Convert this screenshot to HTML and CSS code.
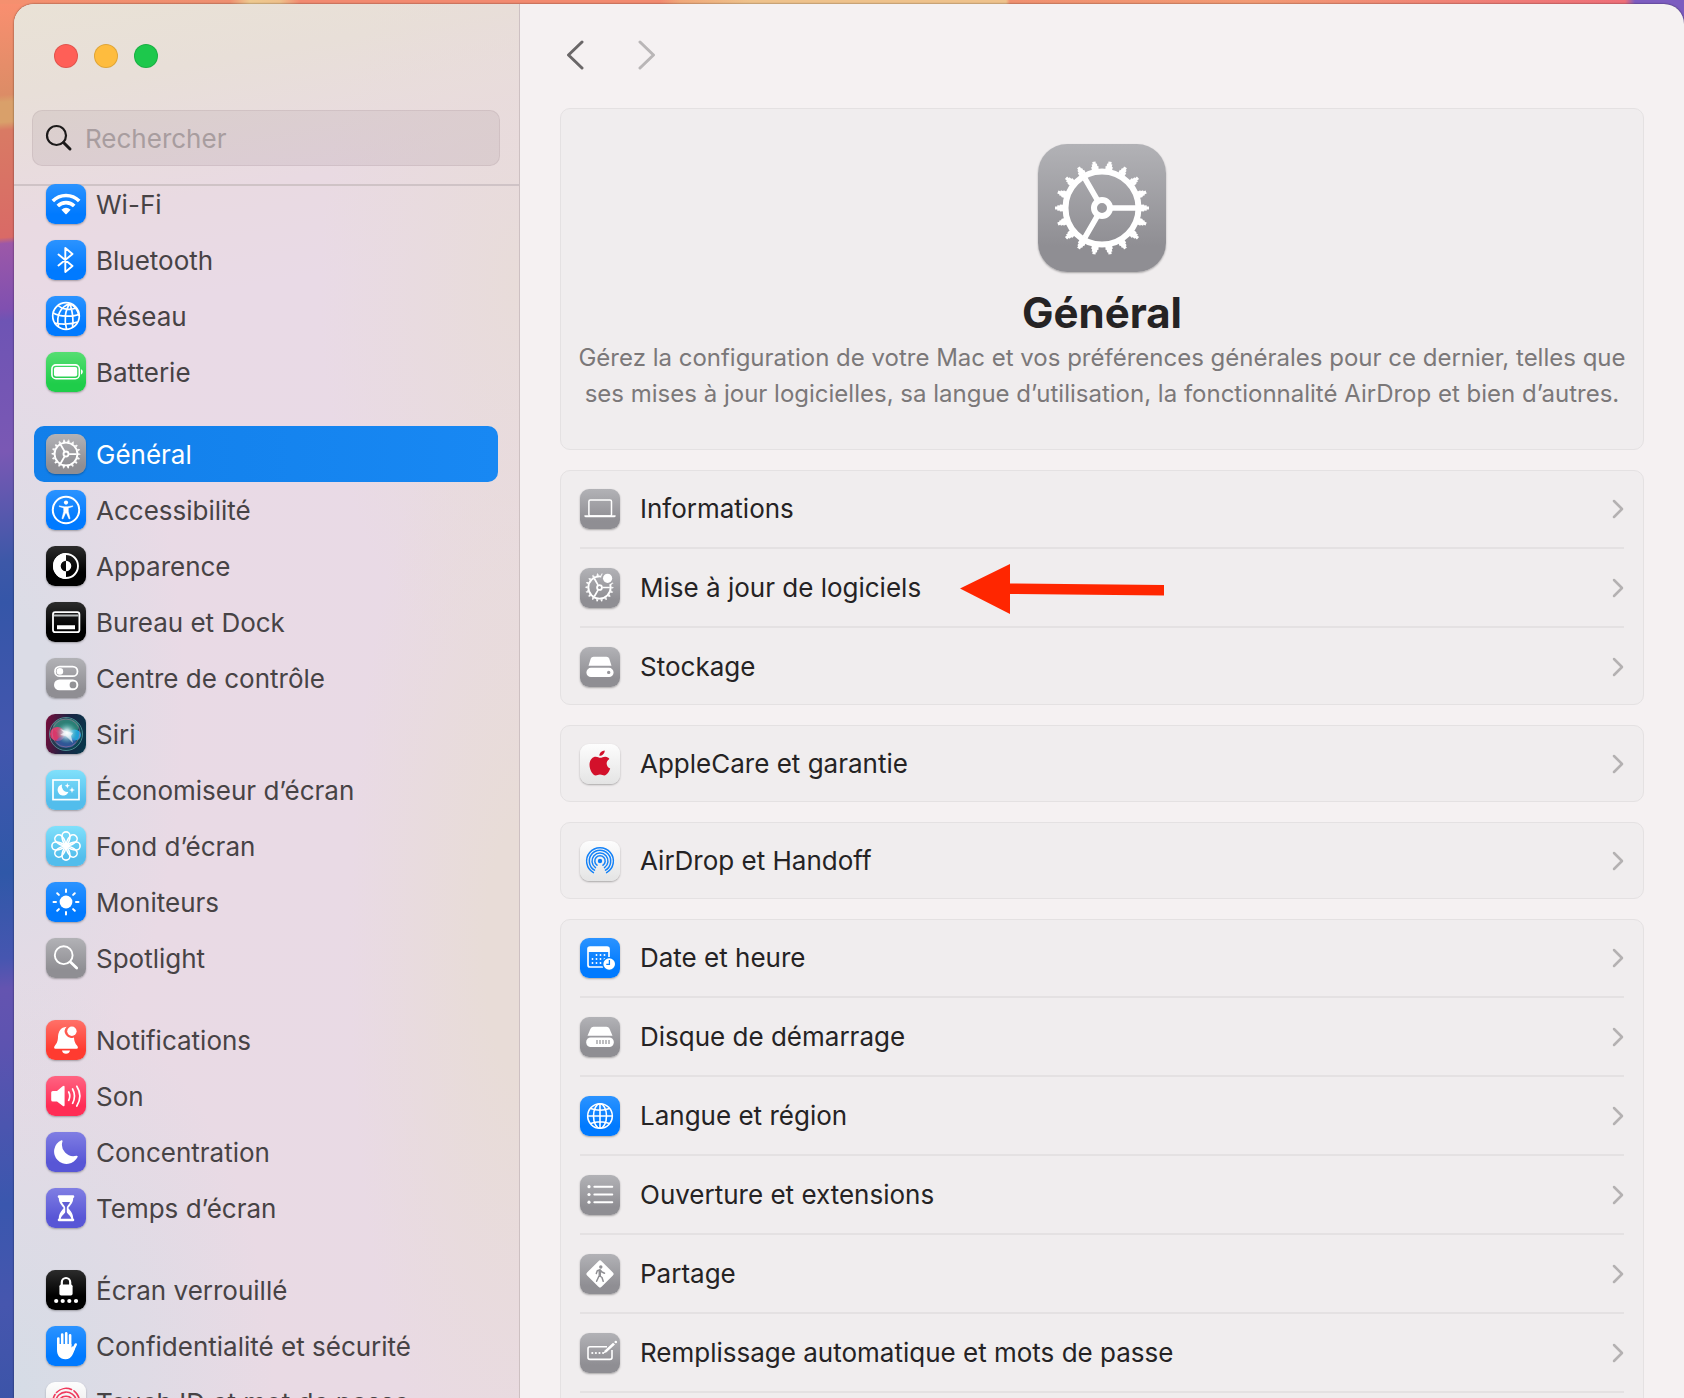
FILE: index.html
```html
<!DOCTYPE html>
<html lang="fr">
<head>
    <meta charset="UTF-8">
    <meta name="viewport" content="width=device-width, initial-scale=1.0">
    <title>Général</title>
    <link rel="stylesheet" href="styles.css">
</head>
<body>
    <!-- Icon sprite -->
    <svg class="sprite" aria-hidden="true">
        <defs>
            <symbol id="i-gear" viewBox="0 0 128 128">
                <g fill="none" stroke="#fff">
                    <circle cx="64" cy="64" r="36.5" stroke-width="6"/>
                    <circle cx="64" cy="64" r="40.5" stroke-width="3.5" pathLength="360" stroke-dasharray="10 10" stroke-dashoffset="5"/>
                    <circle cx="64" cy="64" r="43" stroke-width="3.5" pathLength="360" stroke-dasharray="7 13" stroke-dashoffset="3.5"/>
                    <circle cx="64" cy="64" r="45.500" stroke-width="3" pathLength="360" stroke-dasharray="4 16" stroke-dashoffset="2"/>
                    <circle cx="64" cy="64" r="8" stroke-width="6"/>
                    <path stroke-width="5.600" d="M74 64H98M59 55.300L47 34.600M59 72.700L47 93.400"/>
                </g>
            </symbol>
            <symbol id="i-wifi" viewBox="0 0 40 40">
                <g fill="none" stroke="#fff" stroke-width="3.600">
                    <path d="M6.800 17A18.600 18.600 0 0 1 33.200 17"/>
                    <path d="M11.800 22A11.600 11.600 0 0 1 28.200 22"/>
                </g>
                <path fill="#fff" d="M15.400 25.700Q20 21.900 24.600 25.700L20.600 29.900Q20 30.400 19.400 29.900Z"/>
            </symbol>
            <symbol id="i-bluetooth" viewBox="0 0 40 40">
                <path fill="none" stroke="#fff" stroke-width="1.900" stroke-linejoin="round" stroke-linecap="round" d="M12.500 14.500L26.500 26L19.300 32V8L26.500 14L12.500 25.500"/>
            </symbol>
            <symbol id="i-network" viewBox="0 0 40 40">
                <g fill="none" stroke="#fff" stroke-width="1.700">
                    <circle cx="20" cy="20" r="13.300"/>
                    <path d="M24 7.500C14 11 10 20 12.500 30.500M24 7.500C19 14 18 24 20.500 33M24 7.500C26 14 28 22 26.500 31M24 7.500C29 10 32 15 33 20M12 9.500C16 13.500 24 14.500 30 12M7.300 17C13 20.500 27 21.500 33.200 18M8.500 27C14 28.500 25 28.500 31.500 26"/>
                </g>
            </symbol>
            <symbol id="i-battery" viewBox="0 0 40 40">
                <rect x="5.900" y="12.900" width="27.400" height="13.800" rx="4" fill="none" stroke="#fff" stroke-width="1.600"/>
                <rect x="8" y="15" width="23.200" height="9.600" rx="2" fill="#fff"/>
                <path fill="#fff" d="M35 17.300C37.400 18 37.400 21.700 35 22.400Z"/>
            </symbol>
            <symbol id="i-access" viewBox="0 0 40 40">
                <circle cx="20" cy="20" r="13.200" fill="none" stroke="#fff" stroke-width="2"/>
                <circle cx="20" cy="12.600" r="2.100" fill="#fff"/>
                <path fill="#fff" stroke="#fff" stroke-width=".500" stroke-linejoin="round" d="M13.200 15.800L18.300 16.700H21.700L26.800 15.800V16.600L22.300 17.900V21.500L24.100 28.600L23 28.900L20.400 23H19.600L17 28.900L15.900 28.600L17.700 21.500V17.900L13.200 16.600Z"/>
            </symbol>
            <symbol id="i-appearance" viewBox="0 0 40 40">
                <circle cx="20" cy="20" r="12" fill="none" stroke="#fff" stroke-width="1.900"/>
                <path fill="#fff" d="M20 7A13 13 0 0 0 20 33V25.300A5.300 5.300 0 0 1 20 14.700Z"/>
                <path fill="#fff" d="M20 14.700A5.300 5.300 0 0 1 20 25.300Z"/>
            </symbol>
            <symbol id="i-dock" viewBox="0 0 40 40">
                <rect x="7" y="10.200" width="26.400" height="20" rx="2.200" fill="none" stroke="#fff" stroke-width="1.800"/>
                <path fill="#b9bdbd" d="M8 12.500H32.500V14.500H8Z"/>
                <path fill="#fff" d="M11 23.200H29V27.200H11Z"/>
            </symbol>
            <symbol id="i-control" viewBox="0 0 40 40">
                <rect x="9" y="8.600" width="22.500" height="9.600" rx="4.800" fill="none" stroke="#fff" stroke-width="1.800"/>
                <circle cx="13.900" cy="13.400" r="3.300" fill="#fff"/>
                <rect x="8" y="21.500" width="24.300" height="10.800" rx="5.400" fill="#fff"/>
                <circle cx="27" cy="26.900" r="3.400" fill="#929296"/>
            </symbol>
            <symbol id="i-siri" viewBox="0 0 40 40">
                <radialGradient id="siriCore" cx=".520" cy=".480" r=".500">
                    <stop offset="0" stop-color="#fff"/>
                    <stop offset=".300" stop-color="#d8eef6" stop-opacity=".850"/>
                    <stop offset="1" stop-color="#35a7a0" stop-opacity="0"/>
                </radialGradient>
                <circle cx="20" cy="20" r="16" fill="#0f5a62" fill-opacity=".550"/>
                <ellipse cx="20" cy="12.500" rx="13" ry="8" fill="#3fb392" fill-opacity=".550"/>
                <ellipse cx="11.500" cy="20" rx="7.500" ry="7" fill="#f8386f" fill-opacity=".850"/>
                <ellipse cx="28.500" cy="21" rx="6.500" ry="5.500" fill="#23b0f0" fill-opacity=".850"/>
                <ellipse cx="20" cy="28" rx="10" ry="6" fill="#4b6ad8" fill-opacity=".500"/>
                <circle cx="20.500" cy="19.500" r="11" fill="url(#siriCore)"/>
                <path fill="#fff" d="M14 15L20 17L27 19L25 22L27 29L20 22L14 21L18 18.500Z" fill-opacity=".600"/>
                <circle cx="20" cy="20" r="16.500" fill="none" stroke="#5fb3ae" stroke-opacity=".700"/>
                <circle cx="20" cy="19" r="14" fill="none" stroke="#c07a9d" stroke-opacity=".500"/>
            </symbol>
            <symbol id="i-saver" viewBox="0 0 40 40">
                <rect x="7" y="10" width="26" height="19.600" fill="none" stroke="#fff" stroke-width="1.700"/>
                <path fill="#fff" d="M16 14.500A5.600 5.600 0 1 0 22.500 21.800A5.600 5.600 0 0 1 16 14.500Z"/>
                <path fill="#fff" d="M21.300 13L22 15.100L24 15.800L22 16.500L21.300 18.500L20.600 16.500L18.700 15.800L20.600 15.100ZM26 17L26.800 19.300L29 20L26.800 20.700L26 23L25.200 20.700L23 20L25.200 19.300Z"/>
            </symbol>
            <symbol id="i-wallpaper" viewBox="0 0 40 40">
                <g fill="none" stroke="#fff" stroke-width="1.600">
                    <path id="petal" d="M20 20C17 16.500 16 13 16 9.900A4 4 0 0 1 24 9.900C24 13 23 16.500 20 20Z"/>
                    <use href="#petal" transform="rotate(45 20 20)"/>
                    <use href="#petal" transform="rotate(90 20 20)"/>
                    <use href="#petal" transform="rotate(135 20 20)"/>
                    <use href="#petal" transform="rotate(180 20 20)"/>
                    <use href="#petal" transform="rotate(225 20 20)"/>
                    <use href="#petal" transform="rotate(270 20 20)"/>
                    <use href="#petal" transform="rotate(315 20 20)"/>
                </g>
            </symbol>
            <symbol id="i-display" viewBox="0 0 40 40">
                <circle cx="20" cy="20" r="6.400" fill="#fff"/>
                <path stroke="#fff" stroke-width="2" stroke-linecap="round" d="M20 7.500V10M20 30V32.500M7.500 20H10M30 20H32.500M11.200 11.200L12.900 12.900M27.100 27.100L28.800 28.800M11.200 28.800L12.900 27.100M27.100 12.900L28.800 11.200"/>
            </symbol>
            <symbol id="i-spotlight" viewBox="0 0 40 40">
                <circle cx="17.700" cy="17.200" r="8.900" fill="none" stroke="#fff" stroke-width="1.900"/>
                <path stroke="#fff" stroke-width="2.800" stroke-linecap="round" d="M24.700 24.200L30.700 30"/>
            </symbol>
            <symbol id="i-bell" viewBox="0 0 40 40">
                <path fill="#fff" d="M20.600 6.800C14.500 7.500 12.300 11.500 12 17C11.800 22 10.500 23.500 9 25.500C7.500 27.500 8 28.800 9.500 28.800H30.500C32 28.800 32.500 27.500 31 25.500C29.500 23.500 28.300 22 28 17.400A6.600 6.600 0 0 1 20.600 6.800ZM16 30.500H24A4.100 4.100 0 0 1 16 30.500Z"/>
                <circle cx="25.900" cy="11.200" r="4.700" fill="#fff"/>
            </symbol>
            <symbol id="i-sound" viewBox="0 0 40 40">
                <path fill="#fff" d="M6.800 15H11L16.600 10.300Q18.600 8.800 18.600 11V29Q18.600 31.200 16.600 29.700L11 25.500H6.800Q5.200 25.500 5.200 24V16.500Q5.200 15 6.800 15Z"/>
                <path fill="none" stroke="#fff" stroke-width="1.700" stroke-linecap="round" d="M22.700 16Q24.900 20 22.700 24.300M26.600 13Q30.400 20 26.600 27.300M30.800 10.300Q37 20 30.800 30"/>
            </symbol>
            <symbol id="i-moon" viewBox="0 0 40 40">
                <path fill="#fff" d="M16.600 9A1 1 0 0 0 15.400 8.200A12.400 12.400 0 1 0 31.600 25A.9.900 0 0 0 30.500 23.800A11.500 11.500 0 0 1 16.600 9Z"/>
            </symbol>
            <symbol id="i-hourglass" viewBox="0 0 40 40">
                <path fill="#fff" d="M13 7.200H27Q28.300 7.200 28.300 8.500Q28.300 9.700 27.200 10C27.200 15 24.500 17 22.200 20C24.500 23 27.200 25.500 27.200 30.500Q28.300 30.900 28.300 32Q28.300 33.300 27 33.300H13Q11.700 33.300 11.700 32Q11.700 30.900 12.800 30.500C12.800 25.500 15.500 23 17.800 20C15.500 17 12.800 15 12.800 10Q11.700 9.700 11.700 8.500Q11.700 7.200 13 7.200Z"/>
                <path fill="#625fd5" d="M16 14H24C23.200 16.500 21 17.500 20.800 19.500V24C21 26 24.500 27 25.300 30.800H14.700C15.500 27 19 26 19.200 24V19.500C19 17.500 16.800 16.500 16 14Z"/>
            </symbol>
            <symbol id="i-lock" viewBox="0 0 40 40">
                <rect x="13.400" y="14.500" width="13.200" height="11" rx="1.800" fill="#fff"/>
                <path fill="none" stroke="#fff" stroke-width="2.200" d="M15.800 16V12.200A4.200 4.200 0 0 1 24.200 12.200V16"/>
                <circle cx="10.200" cy="31" r="2.100" fill="#fff"/>
                <circle cx="16.700" cy="31" r="2.100" fill="#fff"/>
                <circle cx="23.300" cy="31" r="2.100" fill="#fff"/>
                <circle cx="30" cy="31" r="2.100" fill="#fff"/>
            </symbol>
            <symbol id="i-hand" viewBox="0 0 40 40">
                <path fill="none" stroke="#fff" stroke-width="2.600" stroke-linecap="round" d="M12.300 12.500V23M16.200 8.500V20M20.200 7.300V20M24.100 9.300V20M29.700 18.500L26.500 25"/>
                <path fill="#fff" d="M11 18H25.400V21.600L27 20L29 22.500C27.500 27 26 33.200 19.500 33.200C13.500 33.200 11 29 11 24Z"/>
            </symbol>
            <symbol id="i-touch" viewBox="0 0 40 40">
                <g fill="none" stroke="#ef3a5d" stroke-width="1.600" stroke-linecap="round">
                    <path d="M10.500 10.500A13.500 13.500 0 0 1 25.500 7.500M28 8.800A13.500 13.500 0 0 1 33.300 18"/>
                    <path d="M7 18A13.500 13.500 0 0 1 9 12.500M9.800 19A10.400 10.400 0 0 1 30.200 18"/>
                    <path d="M12.800 20A7.400 7.400 0 0 1 27.200 20M16 21A4.300 4.300 0 0 1 24 21"/>
                </g>
            </symbol>
            <symbol id="i-laptop" viewBox="0 0 40 40">
                <rect x="8.900" y="10.900" width="22.600" height="16" rx="1.500" fill="none" stroke="#fff" stroke-width="1.500"/>
                <path fill="#fff" d="M4.400 26.200H35.600V27.200Q35.600 28.300 34 28.300H6Q4.400 28.300 4.400 27.200Z"/>
            </symbol>
            <symbol id="i-update" viewBox="0 0 40 40">
                <mask id="updateCut">
                    <path fill="#fff" d="M0 0H40V40H0Z"/>
                    <circle cx="27.400" cy="10.300" r="6.300" fill="#000"/>
                </mask>
                <g mask="url(#updateCut)"><use href="#i-gear" width="39" height="39" x="0" y="0"/></g>
                <circle cx="27.600" cy="10.300" r="4.600" fill="#fff"/>
            </symbol>
            <symbol id="i-storage" viewBox="0 0 40 40">
                <path fill="#fff" d="M13.500 9.800H26.500Q28.600 9.800 29.300 11.800L31.500 18.800H8.500L10.700 11.800Q11.400 9.800 13.500 9.800Z"/>
                <path fill="#fff" fill-rule="evenodd" d="M11 20.800H29A4.600 4.600 0 0 1 29 30H11A4.600 4.600 0 0 1 11 20.800ZM28.700 23.700A1.700 1.700 0 0 0 28.700 27.100A1.700 1.700 0 0 0 28.700 23.700Z"/>
            </symbol>
            <symbol id="i-apple" viewBox="0 0 40 40">
                <path fill="#d3112b" d="M20.200 13.800C22 13.800 23.200 12.600 25.300 12.700C27.200 12.800 28.600 13.700 29.400 14.900C25.300 17.400 26 22.900 30.200 24.600C29 28 26.700 31.500 24.300 31.500C22.800 31.500 22 30.600 20 30.600C18 30.600 17.200 31.500 15.800 31.500C12.600 31.500 9.500 25.600 9.500 20.800C9.500 15.600 12.600 12.700 15.800 12.700C17.700 12.700 19 13.800 20.200 13.800ZM19.400 11.800C19.200 9 21.900 6.500 24.700 6.400C24.900 9.300 22.300 12 19.400 11.800Z"/>
            </symbol>
            <symbol id="i-airdrop" viewBox="0 0 40 40">
                <circle cx="20" cy="20" r="2.200" fill="#0a7cf5"/>
                <g fill="none" stroke="#1482f7" stroke-width="1.500" stroke-linecap="round">
                    <path d="M17 24.200A5.200 5.200 0 1 1 23 24.200"/>
                    <path d="M15.500 26.600A8 8 0 1 1 24.500 26.600"/>
                    <path d="M14.500 29.200A10.700 10.700 0 1 1 25.500 29.200"/>
                    <path d="M13.400 31.700A13.400 13.400 0 1 1 26.600 31.700"/>
                </g>
            </symbol>
            <symbol id="i-date" viewBox="0 0 40 40">
                <path fill="none" stroke="#fff" stroke-width="1.700" d="M23 29H10Q8 29 8 27V11Q8 9.200 10 9.200H27Q29 9.200 29 11V19"/>
                <path fill="#fff" d="M8 10H29V14H8Z"/>
                <path stroke="#fff" stroke-width="1.900" stroke-linecap="round" stroke-dasharray="0 4" d="M16.500 17H26M12.500 21H25M12.500 25H22"/>
                <circle cx="29.200" cy="26" r="7" fill="#0480fb"/>
                <circle cx="29.200" cy="26" r="5.800" fill="#fff"/>
                <path fill="none" stroke="#0480fb" stroke-width="1.300" d="M29.400 22V26.400H26.300"/>
            </symbol>
            <symbol id="i-disk" viewBox="0 0 40 40">
                <path fill="#fff" d="M13.500 9.800H26.500Q28.600 9.800 29.500 11.800L32.500 18.800H7.500L10.500 11.800Q11.400 9.800 13.500 9.800Z"/>
                <rect x="6.200" y="20.500" width="27.600" height="9.500" rx="4.500" fill="#fff"/>
                <path stroke="#929296" stroke-width="1.200" d="M17 23V27M20 23V27M23 23V27M26 23V27M29 23V27"/>
            </symbol>
            <symbol id="i-globe" viewBox="0 0 40 40">
                <g fill="none" stroke="#fff" stroke-width="1.600">
                    <circle cx="20" cy="20" r="12.300"/>
                    <ellipse cx="20" cy="20" rx="6.500" ry="12.300"/>
                    <path d="M20 7.700V32.300M7.700 20H32.300M10.500 12.500Q20 16 29.500 12.500M10.500 27.500Q20 24 29.500 27.500"/>
                </g>
            </symbol>
            <symbol id="i-list" viewBox="0 0 40 40">
                <g fill="#fff"><circle cx="9" cy="11.700" r="1.600"/><circle cx="9" cy="19.500" r="1.600"/><circle cx="9" cy="27.200" r="1.600"/></g>
                <path stroke="#fff" stroke-width="1.900" stroke-linecap="round" d="M14.300 11.700H32.300M14.300 19.500H32.300M14.300 27.200H32.300"/>
            </symbol>
            <symbol id="i-share" viewBox="0 0 40 40">
                <rect x="9.800" y="9.800" width="20.400" height="20.400" rx="2.200" fill="#fff" transform="rotate(45 20 20)"/>
                <circle cx="20.800" cy="13" r="1.700" fill="#8f8f93"/>
                <path fill="none" stroke="#8f8f93" stroke-width="1.500" stroke-linecap="round" stroke-linejoin="round" d="M16.300 19.500L17.300 16.700L20 15.800L22 18L24.500 19.200M19.300 17V21.500L22 23.500L23.200 27.200M19 22L16.600 27.200M20.300 16.500V21.500"/>
            </symbol>
            <symbol id="i-autofill" viewBox="0 0 40 40">
                <path fill="none" stroke="#fff" stroke-width="1.600" d="M27 13.700H10Q8 13.700 8 15.700V24.500Q8 26.400 10 26.400H30Q32 26.400 32 24.500V17"/>
                <path stroke="#fff" stroke-width="2.200" stroke-linecap="round" stroke-dasharray="0 3.600" d="M12.300 20H23.500"/>
                <path fill="#fff" d="M33 9.800L35 11.600L26.500 19.300L23.600 20.300L24.700 17.600Z"/>
                <circle cx="35.800" cy="9" r="1.300" fill="#fff"/>
            </symbol>
            <symbol id="i-chevron" viewBox="0 0 12 20">
                <path fill="none" stroke="currentColor" stroke-width="2.500" stroke-linecap="round" stroke-linejoin="round" d="M2 2L10 10L2 18"/>
            </symbol>
            <symbol id="i-arrow-nav" viewBox="0 0 18 30">
                <path fill="none" stroke="currentColor" stroke-width="3" stroke-linecap="round" stroke-linejoin="round" d="M2 2L15.500 15L2 28"/>
            </symbol>
        </defs>
    </svg>

    <div class="window">
        <aside class="sidebar">
            <header class="sidebar-header">
                <div class="traffic">
                    <button class="light red" aria-label="Fermer"></button>
                    <button class="light yellow" aria-label="Réduire"></button>
                    <button class="light green" aria-label="Agrandir"></button>
                </div>
                <label class="search">
                    <svg viewBox="0 0 28 28" width="28" height="28" aria-hidden="true">
                        <circle cx="11.500" cy="11.500" r="9.500" fill="none" stroke="#1c1a1a" stroke-width="2.200"/>
                        <path d="M18.500 18.500L25 25" stroke="#1c1a1a" stroke-width="3" stroke-linecap="round"/>
                    </svg>
                    <input type="search" placeholder="Rechercher" aria-label="Rechercher">
                </label>
            </header>

            <nav class="menu">
                <div class="menu-group">
                    <a href="#"><svg class="icon blue"><use href="#i-wifi"/></svg>Wi-Fi</a>
                    <a href="#"><svg class="icon blue"><use href="#i-bluetooth"/></svg>Bluetooth</a>
                    <a href="#"><svg class="icon blue"><use href="#i-network"/></svg>Réseau</a>
                    <a href="#"><svg class="icon lime"><use href="#i-battery"/></svg>Batterie</a>
                </div>
                <div class="menu-group">
                    <a href="#" class="active" aria-current="page"><svg class="icon gray"><use href="#i-gear"/></svg>Général</a>
                    <a href="#"><svg class="icon blue"><use href="#i-access"/></svg>Accessibilité</a>
                    <a href="#"><svg class="icon black"><use href="#i-appearance"/></svg>Apparence</a>
                    <a href="#"><svg class="icon black"><use href="#i-dock"/></svg>Bureau et Dock</a>
                    <a href="#"><svg class="icon gray"><use href="#i-control"/></svg>Centre de contrôle</a>
                    <a href="#"><svg class="icon siri"><use href="#i-siri"/></svg>Siri</a>
                    <a href="#"><svg class="icon sky"><use href="#i-saver"/></svg>Économiseur d’écran</a>
                    <a href="#"><svg class="icon sky"><use href="#i-wallpaper"/></svg>Fond d’écran</a>
                    <a href="#"><svg class="icon blue"><use href="#i-display"/></svg>Moniteurs</a>
                    <a href="#"><svg class="icon gray"><use href="#i-spotlight"/></svg>Spotlight</a>
                </div>
                <div class="menu-group">
                    <a href="#"><svg class="icon orange"><use href="#i-bell"/></svg>Notifications</a>
                    <a href="#"><svg class="icon pink"><use href="#i-sound"/></svg>Son</a>
                    <a href="#"><svg class="icon indigo"><use href="#i-moon"/></svg>Concentration</a>
                    <a href="#"><svg class="icon indigo"><use href="#i-hourglass"/></svg>Temps d’écran</a>
                </div>
                <div class="menu-group">
                    <a href="#"><svg class="icon black"><use href="#i-lock"/></svg>Écran verrouillé</a>
                    <a href="#"><svg class="icon blue"><use href="#i-hand"/></svg>Confidentialité et sécurité</a>
                    <a href="#"><svg class="icon white"><use href="#i-touch"/></svg>Touch ID et mot de passe</a>
                </div>
            </nav>
        </aside>

        <main class="content">
            <div class="toolbar">
                <button class="nav-btn back" aria-label="Précédent"><svg><use href="#i-arrow-nav"/></svg></button>
                <button class="nav-btn" aria-label="Suivant" disabled><svg><use href="#i-arrow-nav"/></svg></button>
            </div>

            <section class="card hero">
                <svg class="icon gray big"><use href="#i-gear"/></svg>
                <h1>Général</h1>
                <p>Gérez la configuration de votre Mac et vos préférences générales pour ce dernier, telles que ses mises à jour logicielles, sa langue d’utilisation, la fonctionnalité AirDrop et bien d’autres.</p>
            </section>

            <ul class="card">
                <li><a href="#"><svg class="icon gray"><use href="#i-laptop"/></svg>Informations<svg class="chevron"><use href="#i-chevron"/></svg></a></li>
                <li>
                    <a href="#"><svg class="icon gray"><use href="#i-update"/></svg>Mise à jour de logiciels<svg class="chevron"><use href="#i-chevron"/></svg></a>
                    <!-- Arrow drawn over the row -->
                    <svg class="arrow" viewBox="0 0 204 50" aria-hidden="true"><path fill="#ff2600" d="M0 24.500L50 0V19.500L204 21V31.500L50 30V50Z"/></svg>
                </li>
                <li><a href="#"><svg class="icon gray"><use href="#i-storage"/></svg>Stockage<svg class="chevron"><use href="#i-chevron"/></svg></a></li>
            </ul>

            <ul class="card">
                <li><a href="#"><svg class="icon white"><use href="#i-apple"/></svg>AppleCare et garantie<svg class="chevron"><use href="#i-chevron"/></svg></a></li>
            </ul>

            <ul class="card">
                <li><a href="#"><svg class="icon white"><use href="#i-airdrop"/></svg>AirDrop et Handoff<svg class="chevron"><use href="#i-chevron"/></svg></a></li>
            </ul>

            <ul class="card">
                <li><a href="#"><svg class="icon blue"><use href="#i-date"/></svg>Date et heure<svg class="chevron"><use href="#i-chevron"/></svg></a></li>
                <li><a href="#"><svg class="icon gray"><use href="#i-disk"/></svg>Disque de démarrage<svg class="chevron"><use href="#i-chevron"/></svg></a></li>
                <li><a href="#"><svg class="icon blue"><use href="#i-globe"/></svg>Langue et région<svg class="chevron"><use href="#i-chevron"/></svg></a></li>
                <li><a href="#"><svg class="icon gray"><use href="#i-list"/></svg>Ouverture et extensions<svg class="chevron"><use href="#i-chevron"/></svg></a></li>
                <li><a href="#"><svg class="icon gray"><use href="#i-share"/></svg>Partage<svg class="chevron"><use href="#i-chevron"/></svg></a></li>
                <li><a href="#"><svg class="icon gray"><use href="#i-autofill"/></svg>Remplissage automatique et mots de passe<svg class="chevron"><use href="#i-chevron"/></svg></a></li>
                <li class="spacer"></li>
            </ul>
        </main>
    </div>
</body>
</html>
```
FILE: styles.css
```css
* {
    margin: 0;
    padding: 0;
    box-sizing: border-box;
}

body {
    font-family: Inter, 'Liberation Sans', sans-serif;
    font-size: 26px;
    color: #252324;
    height: 100vh;
    overflow: hidden;
    padding: 4px 0 0 14px;
    background:
        linear-gradient(90deg, #f5906f 0, #ee8f70 230px, #eec98f 250px, #eec08a 280px, #f28a70 300px, #f28a70 660px, #f0a87a 680px, #eec28c 750px, #eec28c 1006px, #f09070 1010px, #f29a74 1250px, #ee6e78 1625px, #7c5cc0 1635px) 0 0 / 100% 4px no-repeat,
        linear-gradient(90deg, #7c5cc0, #7c5cc0) 100% 0 / 30px 30px no-repeat,
        linear-gradient(175deg, #fa8f70 0, #dc8c66 95px, #d9a06a 102px, #d9a06a 122px, #d97a64 130px, #d96a66 237px, #9c58a8 243px, #8050b0 308px, #6e54b4 320px, #7a58b4 450px, #3d58a8 560px, #3556a8 600px, #4356ae 735px, #2f58a8 870px, #4656b0 955px, #6454b0 985px, #5d53b0 1040px, #3a57ae 1200px, #4656ae 1300px, #3c54a8 100%) 0 0 / 40px 100% no-repeat;
}

.sprite {
    position: absolute;
    width: 0;
    height: 0;
}

.window {
    display: flex;
    height: 100%;
    overflow: hidden;
    border-radius: 20px 20px 0 0;
    background: #f5f1f2;
    box-shadow: 0 0 2px rgba(0, 0, 0, 0.6);
}

/* Sidebar */
.sidebar {
    flex: 0 0 506px;
    min-width: 0;
    border-right: 1px solid #cdc0c2;
    background:
        radial-gradient(ellipse 260px 420px at 0 100%, #d5dce6 0, rgba(213, 220, 230, 0) 100%),
        radial-gradient(ellipse 170px 420px at 0 50%, #dbdce6 20%, rgba(219, 220, 230, 0) 100%),
        radial-gradient(ellipse 170px 600px at 100% 68%, #e8dcd7 20%, rgba(232, 220, 215, 0) 100%),
        radial-gradient(ellipse 200px 400px at 100% 20%, #e8dcd9 0, rgba(232, 220, 217, 0) 100%),
        linear-gradient(170deg, #e9e2d6 0, #e8dfd8 90px, #e9dae2 220px, #e9dae6 320px, #e9dae4 100%);
}

.sidebar-header {
    height: 182px;
    padding: 40px 19px 0 18px;
    border-bottom: 2px solid #cfc3c6;
}

.traffic {
    display: flex;
    gap: 16px;
    padding-left: 22px;
    margin-bottom: 42px;
}

.light {
    width: 24px;
    height: 24px;
    border-radius: 50%;
    border: 1px solid rgba(0, 0, 0, 0.12);
}

.red {
    background: #ff5f57;
}

.yellow {
    background: #febc3e;
}

.green {
    background: #1dc84c;
}

.search {
    display: flex;
    align-items: center;
    gap: 12px;
    height: 56px;
    padding: 0 12px;
    border: 1px solid rgba(60, 30, 40, 0.07);
    border-radius: 10px;
    background: rgba(60, 30, 40, 0.07);
}

.search svg {
    flex: none;
}

.search input {
    flex: 1;
    width: 100%;
    min-width: 0;
    border: none;
    outline: none;
    background: none;
    font: inherit;
}

.search input::placeholder {
    color: #a89d9f;
}

/* The list is scrolled slightly under the header line */
.menu {
    position: relative;
    margin-top: -10px;
    padding: 0 21px 0 20px;
}

.menu-group {
    margin-bottom: 26px;
}

.menu a {
    display: flex;
    align-items: center;
    gap: 10px;
    height: 56px;
    padding: 0 12px;
    border-radius: 10px;
    color: #474345;
    text-decoration: none;
    white-space: nowrap;
}

.menu a.active {
    background: linear-gradient(90deg, #117fea, #1888f3);
    color: #fff;
}

/* Icon tiles */
.icon {
    flex: none;
    width: 40px;
    height: 40px;
    border-radius: 9px;
    box-shadow: 0 1px 2px rgba(0, 0, 0, 0.3);
}

.blue {
    background: linear-gradient(#2b93ff, #007aff 75%);
}

.lime {
    background: linear-gradient(#56de72, #1fcd4a 80%);
}

.gray {
    background: linear-gradient(#b2b2b6, #8f8e93 80%);
}

.black {
    background: linear-gradient(#2c2c2c, #000 65%);
}

.sky {
    background: linear-gradient(#80e0fb, #52bdec 80%);
}

.orange {
    background: linear-gradient(#ff7168, #ff3b30 75%);
}

.pink {
    background: linear-gradient(#ff6482, #ff2d55 75%);
}

.indigo {
    background: linear-gradient(#807ee3, #5856d6 75%);
}

.white {
    background: linear-gradient(#fdfdfd, #e4e4e4);
}

.siri {
    background: linear-gradient(100deg, #7a0c3a, #1b2444 50%, #063a4c);
}

.big {
    width: 128px;
    height: 128px;
    border-radius: 29px;
}

/* Content */
.content {
    flex: 1;
    min-width: 0;
    padding: 0 40px;
    display: flex;
    flex-direction: column;
    gap: 20px;
}

.toolbar {
    display: flex;
    align-items: center;
    gap: 42px;
    height: 84px;
    padding-top: 18px;
    flex: none;
}

.nav-btn {
    width: 30px;
    height: 40px;
    border: none;
    background: none;
    color: #6a6768;
}

.nav-btn:disabled {
    color: #b9b6b7;
}

.nav-btn svg {
    display: block;
    width: 18px;
    height: 30px;
    margin: auto;
}

.nav-btn.back svg {
    transform: scaleX(-1);
}

.card {
    flex: none;
    list-style: none;
    padding: 0 19px;
    border: 1px solid #e4e1e2;
    border-radius: 10px;
    background: #f0edee;
}

.hero {
    display: flex;
    flex-direction: column;
    align-items: center;
    padding: 35px 12px 37px;
    text-align: center;
}

.hero h1 {
    margin-top: 14px;
    font-size: 42px;
    line-height: 54px;
}

.hero p {
    font-size: 24px;
    line-height: 36px;
    color: #7b7879;
}

.card li {
    position: relative;
}

.card li + li {
    margin-top: 1px;
    padding-top: 1px;
    border-top: 2px solid #e4e1e2;
}

.card a {
    display: flex;
    align-items: center;
    gap: 20px;
    height: 75px;
    color: inherit;
    text-decoration: none;
}

.chevron {
    width: 12px;
    height: 20px;
    margin-left: auto;
    color: #b4b1b2;
}

.arrow {
    position: absolute;
    left: 380px;
    top: 15px;
    width: 204px;
    height: 50px;
}

.spacer {
    height: 75px;
}
```
